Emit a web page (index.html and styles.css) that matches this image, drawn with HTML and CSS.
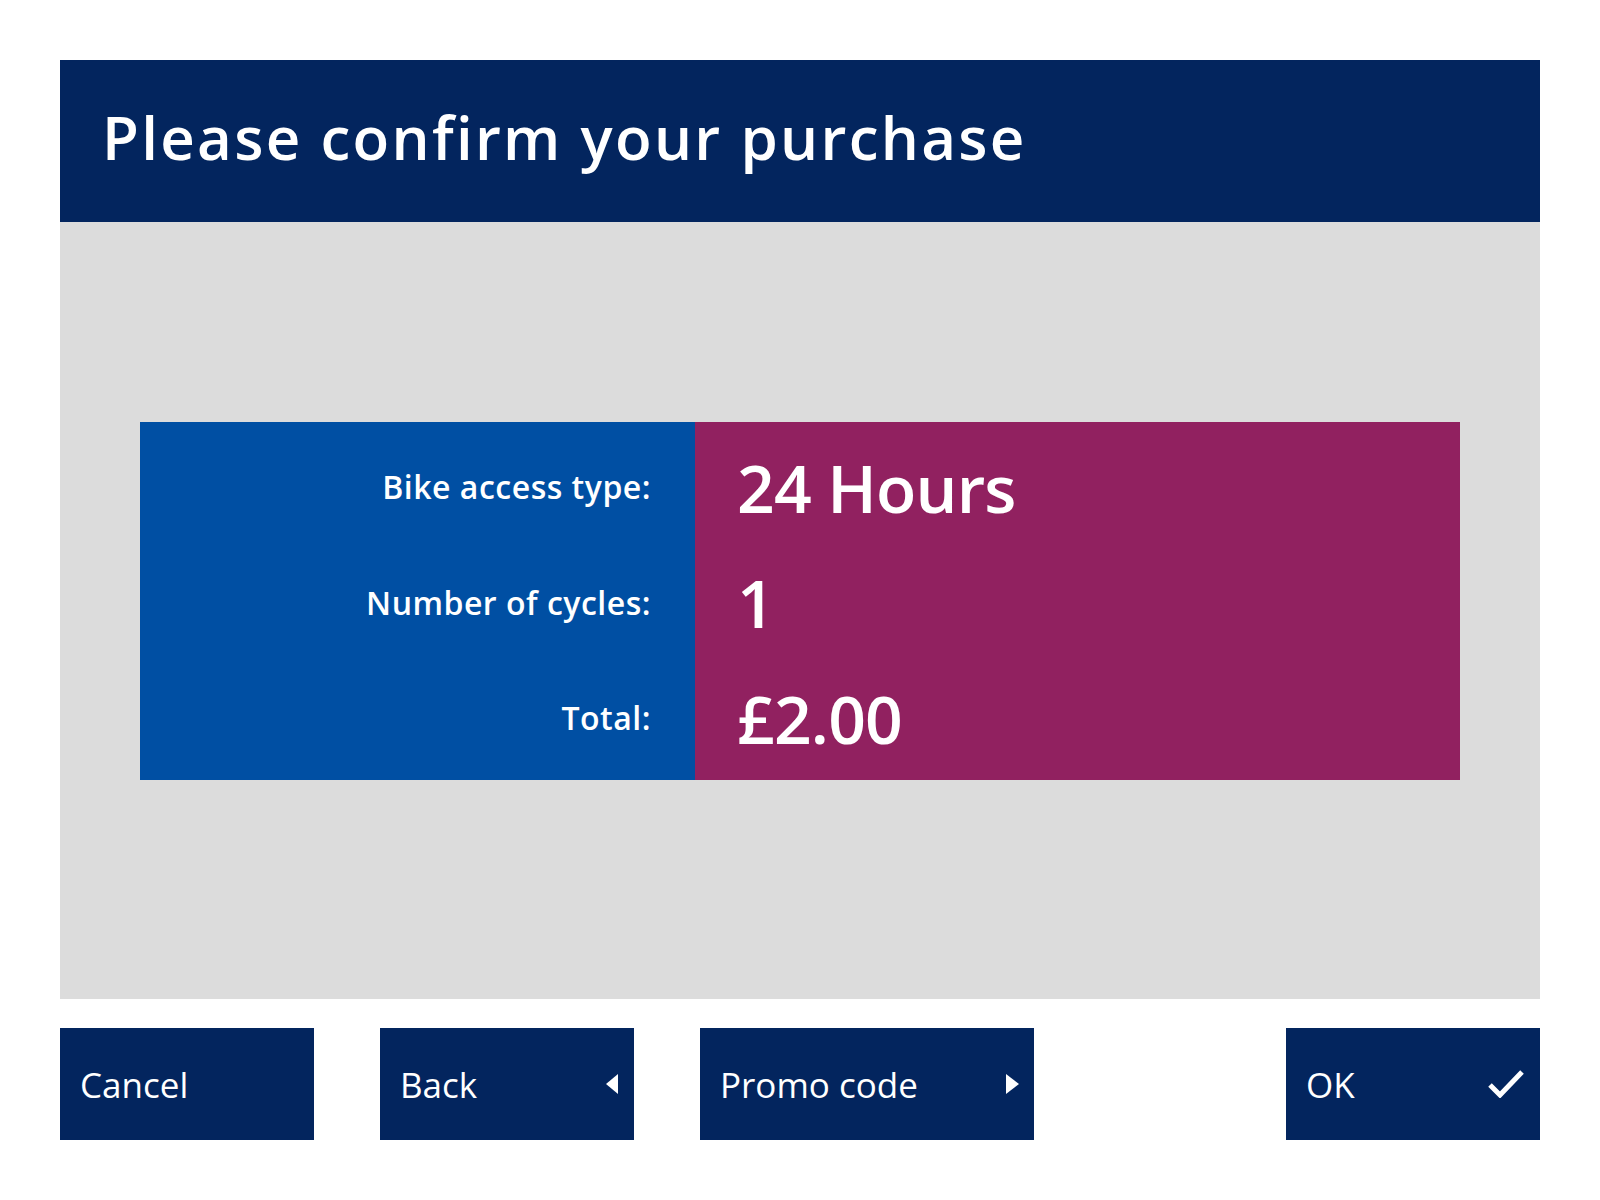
FILE: index.html
```html
<!DOCTYPE html>
<html lang="en">
<head>
<meta charset="utf-8">
<title>Please confirm your purchase</title>
<link rel="stylesheet" href="styles.css">
</head>
<body>
<div class="screen">
  <header class="header">
    <h1 class="title">Please confirm your purchase</h1>
  </header>
  <main class="panel">
    <div class="summary">
      <div class="labels">
        <div class="row label">Bike access type:</div>
        <div class="row label">Number of cycles:</div>
        <div class="row label">Total:</div>
      </div>
      <div class="values">
        <div class="row value">24 Hours</div>
        <div class="row value">1</div>
        <div class="row value">£2.00</div>
      </div>
    </div>
  </main>
  <nav class="actions">
    <button class="btn btn-cancel"><span class="btn-text">Cancel</span></button>
    <button class="btn btn-back"><span class="btn-text">Back</span>
      <svg class="icon icon-tri" viewBox="0 0 12 20" width="12" height="20"><polygon points="12,0 12,20 0,10" fill="#fff"/></svg>
    </button>
    <button class="btn btn-promo"><span class="btn-text">Promo code</span>
      <svg class="icon icon-tri" viewBox="0 0 13 20" width="13" height="20"><polygon points="0,0 0,20 13,10" fill="#fff"/></svg>
    </button>
    <button class="btn btn-ok"><span class="btn-text">OK</span>
      <svg class="icon icon-check" viewBox="0 0 36 28" width="36" height="28"><polyline points="2,15 12,25 34,2" fill="none" stroke="#fff" stroke-width="5" stroke-linejoin="miter"/></svg>
    </button>
  </nav>
</div>
</body>
</html>
```

FILE: styles.css
```css
* { box-sizing: border-box; }

html, body {
  margin: 0;
  padding: 0;
  background: #ffffff;
}

body {
  font-family: "Open Sans", "Liberation Sans", sans-serif;
  color: #ffffff;
}

.screen {
  width: 1600px;
  height: 1200px;
  padding: 60px 60px 0 60px;
  display: flex;
  flex-direction: column;
}

.header {
  height: 162px;
  background: #03255e;
  display: flex;
  align-items: flex-start;
  padding-left: 42px;
}

.title {
  margin: 0;
  font-size: 60px;
  font-weight: 600;
  line-height: 82px;
  padding-top: 36px;
  letter-spacing: 2.3px;
}

.panel {
  height: 777px;
  background: #dcdcdc;
  padding: 200px 80px 0 80px;
}

.summary {
  display: flex;
  height: 358px;
}

.labels {
  width: 555px;
  background: #004fa3;
  padding: 7px 44px 0 0;
  text-align: right;
}

.values {
  flex: 1;
  background: #912160;
  padding: 7px 0 0 42px;
}

.row {
  height: 115.5px;
  display: flex;
  align-items: center;
}

.labels .row { justify-content: flex-end; }

.label {
  font-size: 32px;
  font-weight: 600;
  letter-spacing: 0.5px;
}

.value {
  font-size: 66px;
  font-weight: 600;
  letter-spacing: -0.8px;
}

.actions {
  margin-top: 29px;
  display: flex;
  gap: 66px;
}

.btn {
  height: 112px;
  width: 254px;
  background: #03255e;
  border: 0;
  color: #ffffff;
  font-family: inherit;
  font-size: 35px;
  font-weight: 400;
  display: flex;
  align-items: center;
  justify-content: space-between;
  padding: 0 16px 0 20px;
  cursor: pointer;
}

.btn-promo { width: 334px; padding-right: 15px; }

.btn-ok { margin-left: auto; }

.btn-text { line-height: 1; }

.icon { display: block; }
```
